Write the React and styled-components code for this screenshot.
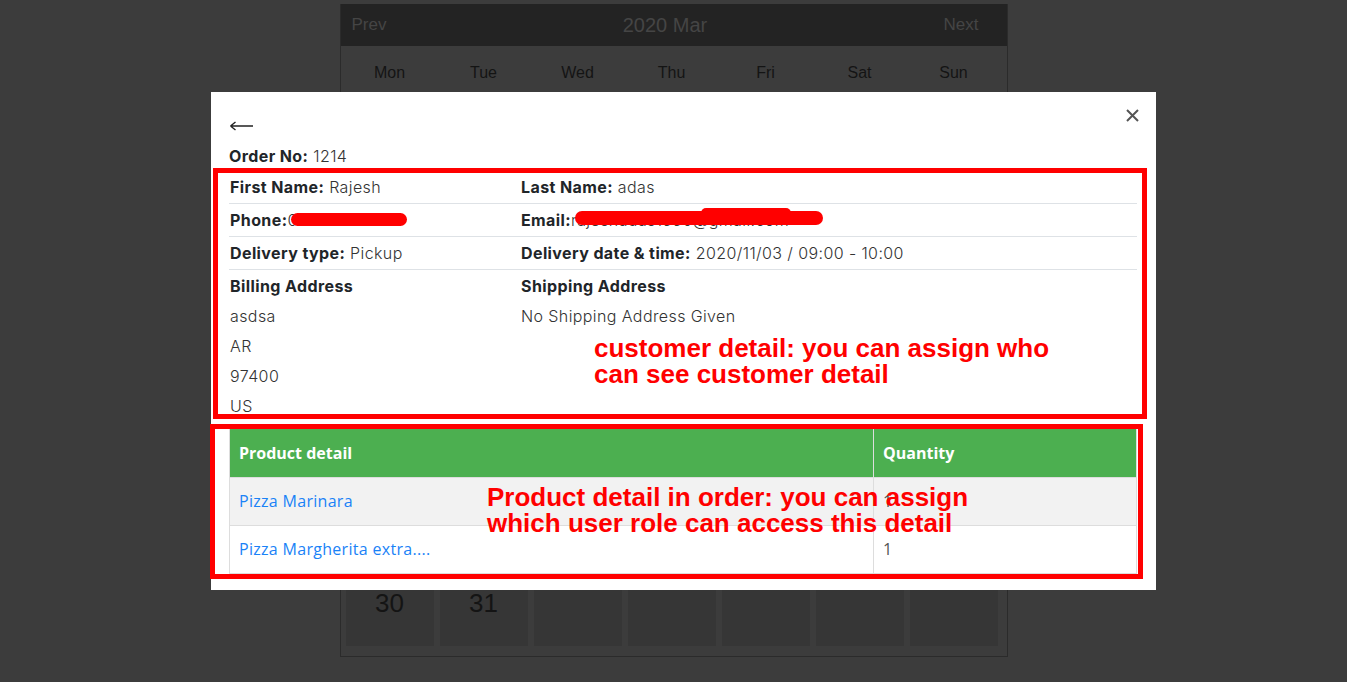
import React from 'react';
import styled, { createGlobalStyle } from 'styled-components';

const GlobalStyle = createGlobalStyle`
    html, body {
        margin: 0;
        padding: 0;
        background-color: #3c3c3c;
    }
    body {
        width: 1347px;
        height: 682px;
        overflow: hidden;
        position: relative;
    }
`;

const Page = styled.div`
    padding-top: 4px;
    display: flex;
    justify-content: center;
    font-family: 'Liberation Sans', Arial, sans-serif;
`;

const Calendar = styled.div`
    width: 668px;
    box-sizing: border-box;
    border: 1px solid #2b2b2b;
    border-top: none;
    background-color: #3c3c3c;
`;

const CalendarHeader = styled.div`
    height: 42px;
    background-color: #232323;
    display: flex;
    align-items: center;
    justify-content: space-between;
    padding: 0 28px 0 11px;
    color: #454545;
    font-size: 17px;
`;

const MonthTitle = styled.span`
    font-size: 20px;
`;

const Grid = styled.div`
    display: grid;
    grid-template-columns: repeat(7, 88px);
    column-gap: 6px;
    row-gap: 6px;
    padding: 0 5px;
`;

const DayName = styled.div`
    height: 54px;
    display: flex;
    align-items: center;
    justify-content: center;
    color: #141414;
    font-size: 16px;
`;

const DayCell = styled.div`
    height: 86px;
    background-color: #363636;
    color: #141414;
    font-size: 26px;
    text-align: center;
    padding-top: 28px;
    box-sizing: border-box;
`;

const CellGrid = styled(Grid)`
    padding-bottom: 10px;
`;

const Modal = styled.div`
    position: absolute;
    left: 211px;
    top: 92px;
    width: 945px;
    height: 498px;
    box-sizing: border-box;
    background-color: #fff;
    padding: 18px 19px 18px 18px;
    font-family: 'Inter', 'Open Sans', sans-serif;
    color: #333;
`;

const CloseButton = styled.button`
    position: absolute;
    top: 16px;
    right: 17px;
    width: 14px;
    height: 14px;
    padding: 0;
    border: none;
    background: none;
    display: flex;
    align-items: center;
    justify-content: center;
`;

const BackArrow = styled.div`
    height: 28px;
    display: flex;
    align-items: center;
    padding-top: 3px;
    box-sizing: border-box;
`;

const OrderLine = styled.div`
    height: 24px;
    line-height: 24px;
    font-size: 16px;
    letter-spacing: 0.4px;
    margin-top: 6px;
    margin-bottom: 3px;
`;

const Label = styled.b`
    font-weight: 700;
    color: #212529;
`;

const Value = styled.span`
    font-weight: 300;
    color: #333;
`;

const InfoTable = styled.div`
    display: grid;
    grid-template-columns: 291px 1fr;
    font-size: 16px;
    letter-spacing: 0.4px;
`;

const InfoCell = styled.div`
    padding: 4px 1px;
    line-height: 24px;
    border-bottom: ${(p) => (p.$last ? 'none' : '1px solid #dee2e6')};
    white-space: nowrap;
`;

const AddressLine = styled.div`
    margin-top: 6px;
    font-weight: 300;
`;

const ProductTable = styled.table`
    width: 100%;
    margin-top: 7px;
    border-collapse: collapse;
    font-family: 'Open Sans', sans-serif;
    font-size: 16px;
`;

const HeadCell = styled.th`
    background-color: #4caf50;
    color: #fff;
    text-align: left;
    font-weight: 700;
    height: 48px;
    padding: 0 9px;
    box-sizing: border-box;
    border: 1px solid #ddd;
    border-top: none;
    width: ${(p) => p.$width || 'auto'};
`;

const Row = styled.tr`
    background-color: ${(p) => (p.$shade ? '#f2f2f2' : '#fff')};
`;

const BodyCell = styled.td`
    height: 47px;
    padding: 0 9px;
    border: 1px solid #ddd;
    color: #555;
`;

const ProductLink = styled.a`
    color: #1a82f7;
    text-decoration: none;
    letter-spacing: 0.3px;
`;

const Highlight = styled.div`
    position: absolute;
    left: ${(p) => p.$left}px;
    top: ${(p) => p.$top}px;
    width: ${(p) => p.$width}px;
    height: ${(p) => p.$height}px;
    box-sizing: border-box;
    border: 5px solid #ff0000;
    pointer-events: none;
`;

const Note = styled.div`
    position: absolute;
    left: ${(p) => p.$left}px;
    top: ${(p) => p.$top}px;
    color: #ff0000;
    font-family: 'Liberation Sans', Arial, sans-serif;
    font-weight: 700;
    font-size: 26px;
    line-height: 26px;
    white-space: nowrap;
`;

const Scribble = styled.span`
    position: absolute;
    left: ${(p) => p.$left}px;
    top: ${(p) => p.$top}px;
    width: ${(p) => p.$width}px;
    height: ${(p) => p.$height}px;
    background-color: #ff0000;
    border-radius: 8px;
`;

const dayNames = ['Mon', 'Tue', 'Wed', 'Thu', 'Fri', 'Sat', 'Sun'];

// March 2020 starts on a Sunday
const days = [
    ...Array(6).fill(null),
    ...Array.from({ length: 31 }, (_, i) => i + 1),
    ...Array(5).fill(null),
];

const App = () => {
    return (
        <>
            <GlobalStyle />
            <Page>
                <Calendar>
                    <CalendarHeader>
                        <span>Prev</span>
                        <MonthTitle>2020 Mar</MonthTitle>
                        <span>Next</span>
                    </CalendarHeader>
                    <Grid>
                        {dayNames.map((d) => (
                            <DayName key={d}>{d}</DayName>
                        ))}
                    </Grid>
                    <CellGrid>
                        {days.map((d, i) => (
                            <DayCell key={i}>{d}</DayCell>
                        ))}
                    </CellGrid>
                </Calendar>
            </Page>

            <Modal>
                <CloseButton aria-label="close">
                    <svg width="13" height="13" viewBox="0 0 13 13">
                        <path d="M1 1 L12 12 M12 1 L1 12" stroke="#555" strokeWidth="2" />
                    </svg>
                </CloseButton>
                <BackArrow>
                    <svg width="25" height="12" viewBox="0 0 25 12">
                        <path
                            d="M1.5 6 H24 M1.5 6 L6.5 2 M1.5 6 L6.5 10"
                            stroke="#222"
                            strokeWidth="1.4"
                            fill="none"
                        />
                    </svg>
                </BackArrow>
                <OrderLine>
                    <Label>Order No:</Label> <Value>1214</Value>
                </OrderLine>

                <InfoTable>
                    <InfoCell>
                        <Label>First Name:</Label> <Value>Rajesh</Value>
                    </InfoCell>
                    <InfoCell>
                        <Label>Last Name:</Label> <Value>adas</Value>
                    </InfoCell>
                    <InfoCell>
                        <Label>Phone:</Label><Value>0987654321</Value>
                    </InfoCell>
                    <InfoCell>
                        <Label>Email:</Label><Value>rajeshadas1990@gmail.com</Value>
                    </InfoCell>
                    <InfoCell>
                        <Label>Delivery type:</Label> <Value>Pickup</Value>
                    </InfoCell>
                    <InfoCell>
                        <Label>Delivery date &amp; time:</Label>{' '}
                        <Value>2020/11/03 / 09:00 - 10:00</Value>
                    </InfoCell>
                    <InfoCell $last>
                        <Label>Billing Address</Label>
                        <AddressLine>asdsa</AddressLine>
                        <AddressLine>AR</AddressLine>
                        <AddressLine>97400</AddressLine>
                        <AddressLine>US</AddressLine>
                    </InfoCell>
                    <InfoCell $last>
                        <Label>Shipping Address</Label>
                        <AddressLine>No Shipping Address Given</AddressLine>
                    </InfoCell>
                </InfoTable>

                <ProductTable>
                    <thead>
                        <tr>
                            <HeadCell $width="644px">Product detail</HeadCell>
                            <HeadCell>Quantity</HeadCell>
                        </tr>
                    </thead>
                    <tbody>
                        <Row $shade>
                            <BodyCell>
                                <ProductLink href="#">Pizza Marinara</ProductLink>
                            </BodyCell>
                            <BodyCell>1</BodyCell>
                        </Row>
                        <Row>
                            <BodyCell>
                                <ProductLink href="#">Pizza Margherita extra....</ProductLink>
                            </BodyCell>
                            <BodyCell>1</BodyCell>
                        </Row>
                    </tbody>
                </ProductTable>

                <Scribble $left={80} $top={121} $width={116} $height={13} />
                <Scribble $left={364} $top={119} $width={248} $height={14} />
                <Scribble $left={490} $top={116} $width={90} $height={10} />

                <Highlight $left={2} $top={76} $width={934} $height={251} />
                <Highlight $left={-1} $top={332} $width={933} $height={155} />

                <Note $left={383} $top={243}>
                    customer detail: you can assign who
                    <br />
                    can see customer detail
                </Note>
                <Note $left={276} $top={392}>
                    Product detail in order: you can assign
                    <br />
                    which user role can access this detail
                </Note>
            </Modal>
        </>
    );
};

export default App;
